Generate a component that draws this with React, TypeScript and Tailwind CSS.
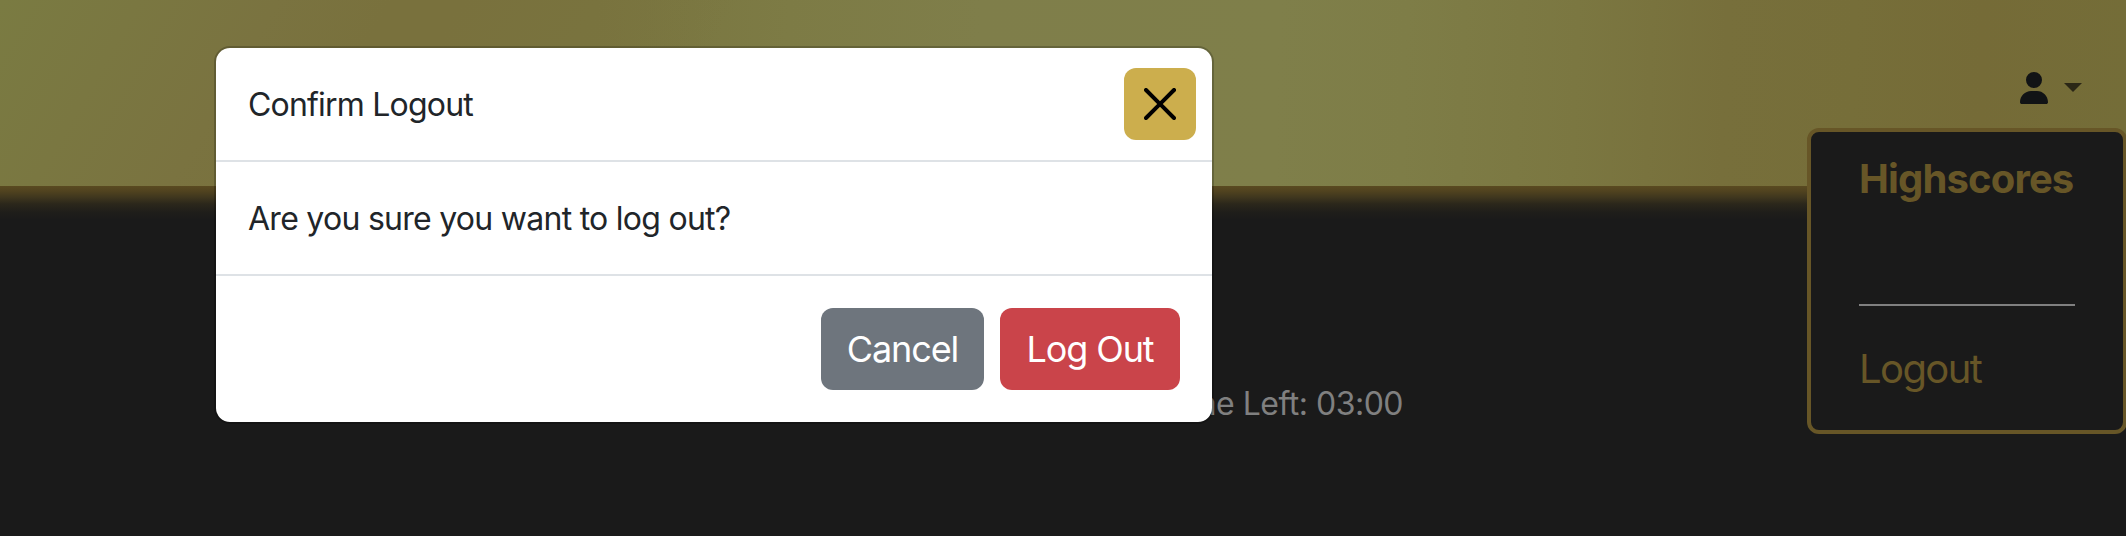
import { FaUser } from "react-icons/fa6";

function Header() {
  return (
    <header className="flex h-[186px] items-start justify-end bg-[linear-gradient(120deg,#7a7b42_0px,#7a7741_120px,#7a7340_240px,#79713d_340px,#79713d_400px,#79713d00_640px),linear-gradient(92deg,#79753f_0%,#79753f_28%,#7d7b45_37%,#7f7e4a_46%,#7f7f4a_60%,#7e7d47_66%,#7b7741_74%,#776f3b_81%,#766e39_87%,#756b37_93%,#746d38_100%)] pr-[44px] pt-[72px]">
      <button className="flex items-start gap-[16px]">
        <FaUser className="h-8 w-7 text-[#111315]" />
        <svg className="mt-[11px] h-[9px] w-[18px]" viewBox="0 0 18 9" fill="#2b2716">
          <path d="M0 0h18L9 9z" />
        </svg>
      </button>
    </header>
  );
}

function AccountMenu() {
  return (
    <nav className="absolute left-[1807px] top-[128px] flex h-[306px] w-[320px] flex-col rounded-xl border-4 border-[#675627] bg-[#1a1a1a] px-[48px] pt-[17px] text-[40px] leading-[60px] text-[#675627]">
      <a className="whitespace-nowrap font-bold tracking-[-0.85px]">Highscores</a>
      <hr className="mt-[95px] border-0 border-t-2 border-[#808080]" />
      <a className="pt-[33px] tracking-[-1.6px]">Logout</a>
    </nav>
  );
}

function LogoutDialog() {
  return (
    <section className="absolute left-[214px] top-[46px] w-[1000px] rounded-2xl border-2 border-black/20 bg-white bg-clip-padding text-[32px] leading-[48px] text-[#212529]">
      <div className="flex h-[114px] items-center justify-between border-b-2 border-[#dee2e6] pl-8 pr-4">
        <h1 className="pt-[2px] tracking-[-0.8px]">Confirm Logout</h1>
        <button className="flex size-[72px] items-center justify-center rounded-xl bg-[#ccae4d]">
          <svg className="size-8" viewBox="0 0 16 16" fill="#000">
            <path d="M.293.293a1 1 0 0 1 1.414 0L8 6.586 14.293.293a1 1 0 1 1 1.414 1.414L9.414 8l6.293 6.293a1 1 0 0 1-1.414 1.414L8 9.414l-6.293 6.293a1 1 0 0 1-1.414-1.414L6.586 8 .293 1.707a1 1 0 0 1 0-1.414z" />
          </svg>
        </button>
      </div>
      <p className="px-8 pb-[31px] pt-[33px] tracking-[-0.73px]">Are you sure you want to log out?</p>
      <div className="flex h-[148px] items-start justify-end gap-4 border-t-2 border-[#dee2e6] px-8 pt-[32px] text-[36px] text-white">
        <button className="h-[82px] w-[163px] rounded-xl bg-[#6e757d] tracking-[-1.1px]">Cancel</button>
        <button className="h-[82px] w-[180px] rounded-xl bg-[#ca444a] tracking-[-1.1px]">Log Out</button>
      </div>
    </section>
  );
}

export default function App() {
  return (
    <div className="relative h-[536px] w-[2126px] overflow-hidden bg-[#1a1a1a] font-[Inter,'Liberation_Sans',sans-serif]">
      <Header />
      <main className="flex h-[350px] justify-end bg-[linear-gradient(180deg,#5a4a21_0px,#51431f_5px,#40371e_11px,#2b271b_18px,#1f1e1a_26px,#1a1a1a_34px)] pr-[723px] pt-[194px]">
        <p className="text-[32px] leading-[48px] tracking-[-0.5px] text-[#808080]">Time Left: 03:00</p>
      </main>
      <AccountMenu />
      <LogoutDialog />
    </div>
  );
}
